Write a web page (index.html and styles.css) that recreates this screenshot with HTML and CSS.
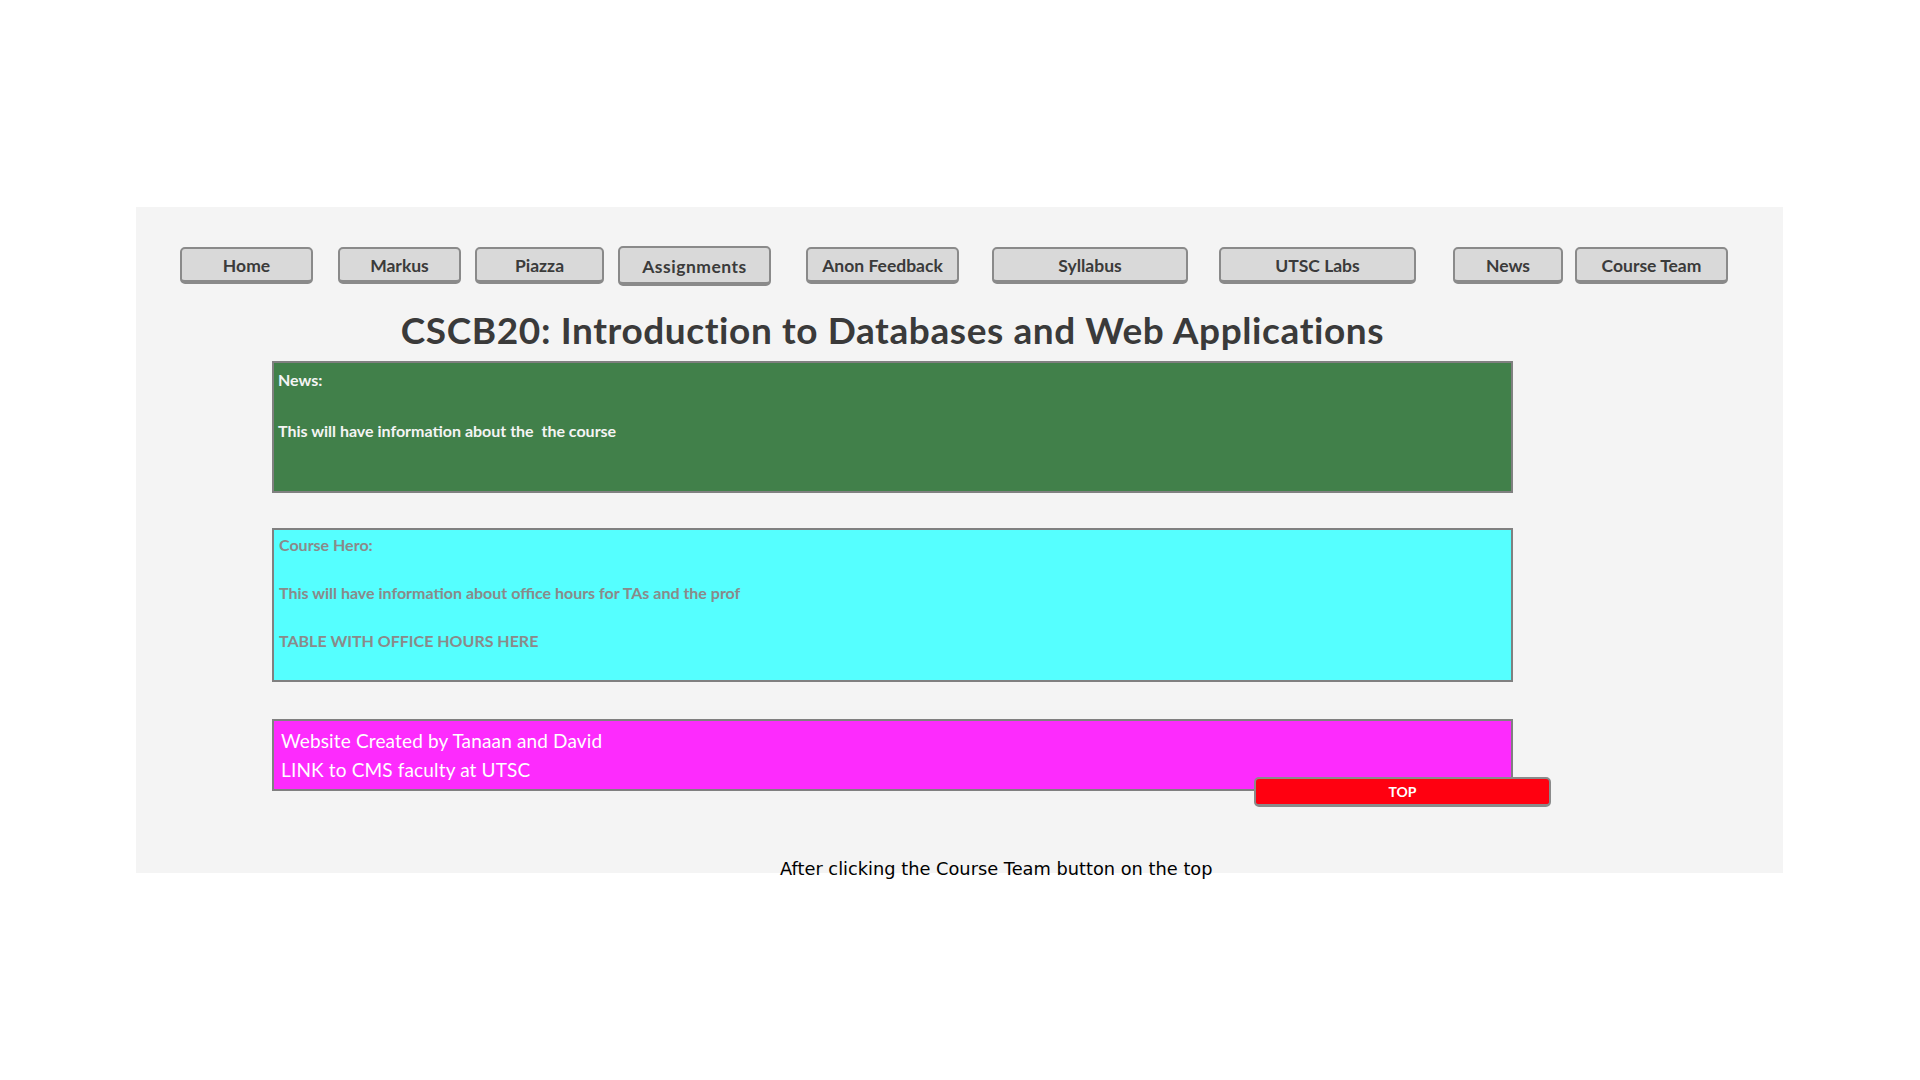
FILE: index.html
```html
<!DOCTYPE html>
<html lang="en">
<head>
<meta charset="utf-8">
<title>CSCB20</title>
<link rel="stylesheet" href="styles.css">
</head>
<body>
<div class="panel">
  <nav class="nav">
    <a class="btn b-home">Home</a>
    <a class="btn b-markus">Markus</a>
    <a class="btn b-piazza">Piazza</a>
    <a class="btn b-assign">Assignments</a>
    <a class="btn b-anon">Anon Feedback</a>
    <a class="btn b-syll">Syllabus</a>
    <a class="btn b-labs">UTSC Labs</a>
    <a class="btn b-news">News</a>
    <a class="btn b-team">Course Team</a>
  </nav>
  <div class="content">
    <h1 class="title">CSCB20: Introduction to Databases and Web Applications</h1>
    <section class="box box-news">
      <p class="line">News:</p>
      <p class="line gap">This will have information about the&nbsp; the course</p>
    </section>
    <section class="box box-hero">
      <p class="line">Course Hero:</p>
      <p class="line gap2">This will have information about office hours for TAs and the prof</p>
      <p class="line gap2">TABLE WITH OFFICE HOURS HERE</p>
    </section>
    <footer class="box box-foot">
      <p class="fline">Website Created by Tanaan and David</p>
      <p class="fline">LINK to CMS faculty at UTSC</p>
    </footer>
  </div>
  <a class="top-btn">TOP</a>
</div>
<p class="caption">After clicking the Course Team button on the top</p>
</body>
</html>
```
FILE: styles.css
```css
html, body {
  margin: 0;
  padding: 0;
  background: #ffffff;
}
body {
  padding-top: 207px;
  font-family: Lato, "Liberation Sans", sans-serif;
}
.panel {
  position: relative;
  margin-left: 136px;
  width: 1647px;
  height: 666px;
  background: #f4f4f4;
}
.nav {
  display: flex;
  align-items: flex-start;
  padding: 40px 0 0 44px;
}
.btn {
  box-sizing: border-box;
  display: flex;
  align-items: center;
  justify-content: center;
  height: 37px;
  background: #d9d9d9;
  border: 2px solid #8a8a8a;
  border-bottom-width: 4px;
  border-radius: 5px;
  color: #3b3b3b;
  font-weight: 700;
  font-size: 17.5px;
  padding-top: 2px;
  white-space: nowrap;
}
.b-home { width: 133px; }
.b-markus { width: 123px; margin-left: 25px; }
.b-piazza { width: 129px; margin-left: 14px; }
.b-assign { width: 153px; margin-left: 14px; height: 40px; margin-top: -1px; letter-spacing: 0.5px; }
.b-anon { width: 153px; margin-left: 35px; }
.b-syll { width: 196px; margin-left: 33px; }
.b-labs { width: 197px; margin-left: 31px; }
.b-news { width: 110px; margin-left: 37px; }
.b-team { width: 153px; margin-left: 12px; }

.content {
  margin-left: 136px;
  width: 1241px;
}
.title {
  margin: 22px 0 10px;
  text-align: center;
  font-size: 37px;
  line-height: 43px;
  letter-spacing: 0.6px;
  font-weight: 700;
  color: #3a3a3a;
}
.box {
  box-sizing: border-box;
  border: 2px solid #808080;
}
.line {
  margin: 0;
  font-size: 16px;
  line-height: 18px;
  font-weight: 700;
}
.box-news {
  background: #41804a;
  color: #f4f4f4;
  padding: 8px 4px 51px;
}
.box-news .gap { margin-top: 33px; }
.box-hero {
  margin-top: 35px;
  background: #55ffff;
  color: #8a8a8a;
  padding: 6px 5px 30px;
}
.box-hero .gap2 { margin-top: 30px; }
.box-foot {
  margin-top: 37px;
  background: #fd2bfd;
  color: #ffffff;
  padding: 5px 7px;
}
.fline {
  margin: 0;
  font-size: 19px;
  line-height: 29px;
  letter-spacing: 0.15px;
}
.top-btn {
  position: absolute;
  left: 1118px;
  top: 570px;
  box-sizing: border-box;
  width: 297px;
  height: 30px;
  display: flex;
  align-items: center;
  justify-content: center;
  background: #ff0010;
  border: 2px solid #8a8a8a;
  border-bottom-width: 3px;
  border-radius: 5px;
  color: #ffffff;
  font-size: 14px;
  font-weight: 700;
}
.caption {
  position: relative;
  margin: -16px 0 0 780px;
  font-family: "DejaVu Sans", sans-serif;
  font-size: 17.8px;
  line-height: 24px;
  color: #000000;
}
```
